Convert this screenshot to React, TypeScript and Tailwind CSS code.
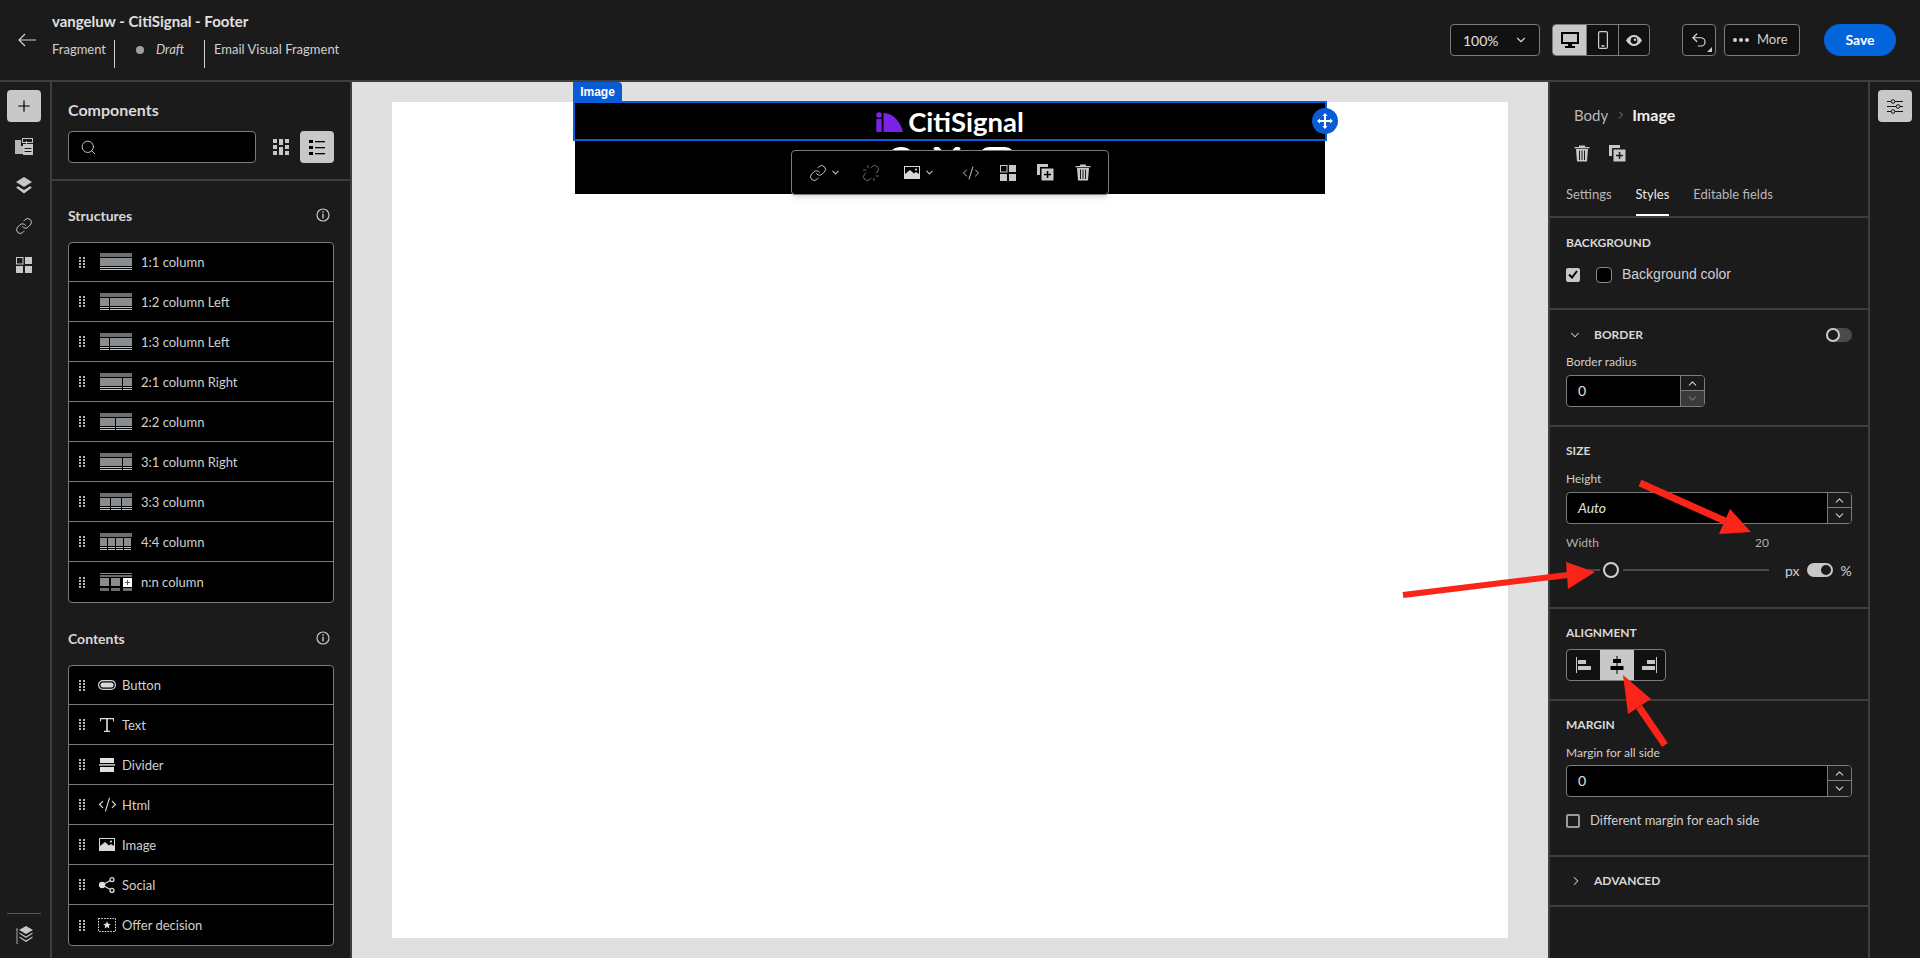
import { ChevronDown, ChevronRight, ChevronUp, CodeXml, Link, Plus, Search, Undo2, Unlink } from 'lucide-react'
import type { ReactNode } from 'react'

const font = { fontFamily: 'Lato, "Open Sans", sans-serif' }

function Handle() {
  return (
    <svg width="6" height="11" viewBox="0 0 6 11" fill="#b5b5b5" className="shrink-0">
      {[0, 3, 6, 9].map((y) => (
        <g key={y}>
          <rect x="0" y={y} width="2" height="2" />
          <rect x="4" y={y} width="2" height="2" />
        </g>
      ))}
    </svg>
  )
}

function Info() {
  return (
    <svg width="14" height="14" viewBox="0 0 14 14" fill="none" stroke="#c8c8c8" strokeWidth="1.2">
      <circle cx="7" cy="7" r="6" />
      <rect x="6.3" y="3.2" width="1.4" height="1.5" fill="#c8c8c8" stroke="none" />
      <rect x="6.3" y="5.8" width="1.4" height="4.6" fill="#c8c8c8" stroke="none" />
    </svg>
  )
}

function GridIcon({ size = 16 }: { size?: number }) {
  return (
    <svg width={size} height={size} viewBox="0 0 16 16" fill="#c8c8c8">
      <rect x="0.5" y="0.5" width="6.5" height="6.5" fill="none" stroke="#c8c8c8" />
      <rect x="9" y="0" width="7" height="7" />
      <rect x="0" y="9" width="7" height="7" />
      <rect x="9" y="9" width="7" height="7" />
    </svg>
  )
}

function TrashIcon({ color = '#c8c8c8' }: { color?: string }) {
  return (
    <svg width="16" height="17" viewBox="0 0 16 17" fill={color}>
      <rect x="0.5" y="2" width="15" height="1.3" />
      <rect x="5" y="0.5" width="6" height="1.5" />
      <path d="M2 4h12l-1 12.5H3z" />
      <g fill="#1b1b1b">
        <rect x="5" y="5.5" width="1" height="9.5" />
        <rect x="7.5" y="5.5" width="1" height="9.5" />
        <rect x="10" y="5.5" width="1" height="9.5" />
      </g>
    </svg>
  )
}

function CopyAddIcon({ plus = '#1b1b1b' }: { plus?: string }) {
  return (
    <svg width="17" height="17" viewBox="0 0 17 17" fill="#c8c8c8">
      <path d="M0 0h11v3H3v8H0z" />
      <rect x="4.5" y="4.5" width="12" height="12" />
      <rect x="7" y="9.8" width="7" height="1.5" fill={plus} />
      <rect x="9.8" y="7" width="1.5" height="7" fill={plus} />
    </svg>
  )
}

function ImageIcon() {
  return (
    <svg width="16" height="13" viewBox="0 0 16 13">
      <rect width="16" height="13" fill="#d8d8d8" />
      <path d="M1 1h14v7l-3-2-2 1.5L6 4 1 8z" fill="#000" />
      <circle cx="12" cy="3.5" r="1.1" fill="#d8d8d8" />
    </svg>
  )
}

function Thumb({ kind }: { kind: number[] }) {
  // each number is one column width of a 32px wide layout preview
  let x = 0
  return (
    <svg width="32" height="18" viewBox="0 0 32 18" className="shrink-0">
      <rect width="32" height="4" fill="#6e6e6e" />
      {kind.map((w, i) => {
        const cx = x
        x += w + 1
        return (
          <g key={i}>
            <rect x={cx} y="5" width={w} height="8" fill="#898d90" />
            <rect x={cx} y="14" width={w} height="1" fill="#c8c8c8" />
            <rect x={cx} y="16" width={w} height="1" fill="#c8c8c8" />
          </g>
        )
      })}
    </svg>
  )
}

function NnThumb() {
  return (
    <svg width="32" height="18" viewBox="0 0 32 18" className="shrink-0">
      <rect width="32" height="1" fill="#8a8a8a" />
      <rect y="2" width="32" height="2" fill="#6e6e6e" />
      <rect y="5" width="9" height="8" fill="#898d90" />
      <rect x="11" y="5" width="9" height="8" fill="#898d90" />
      <rect x="0" y="15" width="9" height="3" fill="#6e6e6e" />
      <rect x="11" y="15" width="9" height="3" fill="#6e6e6e" />
      <rect x="23" y="5" width="9" height="9" fill="#fff" />
      <rect x="25" y="9" width="5" height="1" fill="#555" />
      <rect x="27" y="7" width="1" height="5" fill="#555" />
      <rect x="23" y="15" width="9" height="3" fill="#6e6e6e" />
    </svg>
  )
}

const structures: { label: string; thumb: ReactNode }[] = [
  { label: '1:1 column', thumb: <Thumb kind={[32]} /> },
  { label: '1:2 column Left', thumb: <Thumb kind={[9, 22]} /> },
  { label: '1:3 column Left', thumb: <Thumb kind={[9, 22]} /> },
  { label: '2:1 column Right', thumb: <Thumb kind={[22, 9]} /> },
  { label: '2:2 column', thumb: <Thumb kind={[15, 16]} /> },
  { label: '3:1 column Right', thumb: <Thumb kind={[22, 9]} /> },
  { label: '3:3 column', thumb: <Thumb kind={[10, 10, 10]} /> },
  { label: '4:4 column', thumb: <Thumb kind={[7, 7, 7, 7]} /> },
  { label: 'n:n column', thumb: <NnThumb /> },
]

const contents: { label: string; icon: ReactNode }[] = [
  {
    label: 'Button',
    icon: (
      <svg width="18" height="10" viewBox="0 0 18 10">
        <rect x="0.6" y="0.6" width="16.8" height="8.8" rx="4.4" fill="none" stroke="#d8d8d8" strokeWidth="1.2" />
        <rect x="2.5" y="2.5" width="13" height="5" rx="2.5" fill="#d8d8d8" />
      </svg>
    ),
  },
  {
    label: 'Text',
    icon: (
      <svg width="14" height="14" viewBox="0 0 14 14" fill="#e0e0e0">
        <path d="M0 0h14v3.5h-1V1.3H7.8v11.4H10V14H4v-1.3h2.2V1.3H1v2.2H0z" />
      </svg>
    ),
  },
  {
    label: 'Divider',
    icon: (
      <svg width="16" height="14" viewBox="0 0 16 14" fill="#e0e0e0">
        <rect x="1" y="0" width="14" height="5" />
        <rect x="0" y="6.2" width="16" height="1.4" />
        <rect x="1" y="9" width="14" height="5" />
      </svg>
    ),
  },
  { label: 'Html', icon: <CodeXml size={19} strokeWidth={1.4} color="#e0e0e0" /> },
  { label: 'Image', icon: <ImageIcon /> },
  {
    label: 'Social',
    icon: (
      <svg width="16" height="16" viewBox="0 0 16 16" fill="none" stroke="#e0e0e0" strokeWidth="1.2">
        <circle cx="3" cy="8" r="2.6" fill="#e0e0e0" />
        <circle cx="13" cy="2.6" r="2" />
        <circle cx="13" cy="13.4" r="2" />
        <path d="M5 7l6.3-3.5M5 9l6.3 3.5" />
      </svg>
    ),
  },
  {
    label: 'Offer decision',
    icon: (
      <svg width="18" height="14" viewBox="0 0 18 14">
        <rect x="0.5" y="0.5" width="17" height="13" fill="none" stroke="#e0e0e0" strokeDasharray="1.6 1.2" />
        <path d="M9 3.2l1.1 2.5 2.7.2-2 1.8.6 2.7L9 9l-2.400 1.400.6-2.700-2-1.800 2.700-.2z" fill="#e0e0e0" />
      </svg>
    ),
  },
]

function ComponentList({ children }: { children: ReactNode }) {
  return <div className="flex flex-col divide-y divide-[#7c7c7c] rounded-[4px] border border-[#7c7c7c] bg-black">{children}</div>
}

function Stepper({ dimDown = false }: { dimDown?: boolean }) {
  return (
    <div className="flex w-[24px] shrink-0 flex-col divide-y divide-[#7c7c7c] border-l border-[#7c7c7c] bg-[#1b1b1b]">
      <div className="flex h-[15px] items-center justify-center">
        <ChevronUp size={13} strokeWidth={2} color="#d0d0d0" />
      </div>
      <div className={dimDown ? 'flex h-[15px] items-center justify-center bg-[#3a3a3a]' : 'flex h-[15px] items-center justify-center'}>
        <ChevronDown size={13} strokeWidth={2} color={dimDown ? '#777777' : '#d0d0d0'} />
      </div>
    </div>
  )
}

function NumberField({ value, italic = false, dimDown = false, className }: { value: string; italic?: boolean; dimDown?: boolean; className: string }) {
  return (
    <div className={`flex h-[32px] overflow-hidden rounded-[4px] border border-[#7c7c7c] bg-black ${className}`}>
      <div className={italic ? 'flex flex-1 items-center pb-[2px] pl-[11px] text-[14px] text-[#e0e0e0] italic' : 'flex flex-1 items-center pb-[2px] pl-[11px] text-[14px] text-[#e0e0e0]'}>{value}</div>
      <Stepper dimDown={dimDown} />
    </div>
  )
}

function SectionTitle({ children }: { children: ReactNode }) {
  return <div className="h-[16px] text-[12px] leading-[16px] font-bold text-[#d8d8d8]">{children}</div>
}

function App() {
  return (
    <div className="relative flex h-[958px] w-[1920px] flex-col overflow-hidden bg-[#1b1b1b] text-[#d0d0d0]" style={font}>
      {/* top bar */}
      <header className="flex h-[82px] shrink-0 items-center border-b-2 border-[#3e3e3e] pr-[24px]">
        <div className="flex w-[52px] shrink-0 justify-center pl-[1px]">
          <svg width="18" height="14" viewBox="0 0 18 14" fill="none" stroke="#d0d0d0" strokeWidth="1.2">
            <path d="M18 7H1M7 1L1 7l6 6" />
          </svg>
        </div>
        <div className="flex flex-col self-start pt-[11px]">
          <div className="text-[15px] leading-[20px] font-bold text-[#e0e0e0]">vangeluw - CitiSignal - Footer</div>
          <div className="mt-[9px] flex h-[28px] items-center text-[13px]">
            <span className="mb-[8px] w-[62px]">Fragment</span>
            <span className="h-[28px] w-px bg-[#d0d0d0]" />
            <span className="mb-[8px] ml-[21px] h-[8px] w-[8px] rounded-full bg-[#a0a0a0]" />
            <span className="mb-[8px] ml-[12px] w-[48px] italic">Draft</span>
            <span className="h-[28px] w-px bg-[#d0d0d0]" />
            <span className="mb-[8px] ml-[9px]">Email Visual Fragment</span>
          </div>
        </div>
        <div className="ml-auto flex items-center">
          <div className="flex h-[32px] w-[90px] items-center justify-between rounded-[4px] border border-[#7c7c7c] bg-[#111111] pr-[11px] pl-[12px] text-[14px] text-[#e0e0e0]">
            100%
            <ChevronDown size={14} strokeWidth={2} color="#d0d0d0" />
          </div>
          <div className="ml-[12px] flex h-[32px] w-[98px] divide-x divide-[#7c7c7c] overflow-hidden rounded-[4px] border border-[#7c7c7c] bg-[#111111]">
            <div className="flex w-[34px] items-center justify-center bg-[#c8c8c8]">
              <svg width="18" height="17" viewBox="0 0 18 17" fill="#000">
                <path d="M0 0h18v12H11v2h3v2H4v-2h3v-2H0zM2 2v8h14V2z" />
              </svg>
            </div>
            <div className="flex w-[32px] items-center justify-center">
              <svg width="10" height="18" viewBox="0 0 10 18" fill="none" stroke="#d0d0d0" strokeWidth="1.2">
                <rect x="0.6" y="0.6" width="8.800" height="16.800" rx="1.500" />
                <rect x="3.500" y="14.200" width="3" height="1.500" fill="#d0d0d0" stroke="none" />
              </svg>
            </div>
            <div className="flex flex-1 items-center justify-center">
              <svg width="16" height="11" viewBox="0 0 16 11">
                <path d="M0 5.500C2 2 5 0 8 0s6 2 8 5.500C14 9 11 11 8 11S2 9 0 5.500z" fill="#d0d0d0" />
                <circle cx="8" cy="5.500" r="3.400" fill="#111111" />
                <circle cx="9" cy="4.800" r="1.200" fill="#d0d0d0" />
              </svg>
            </div>
          </div>
          <div className="relative ml-[32px] flex h-[32px] w-[34px] items-center justify-center rounded-[4px] border border-[#7c7c7c] bg-[#111111]">
            <Undo2 size={18} strokeWidth={1.6} color="#d8d8d8" />
            <span className="absolute right-[3px] bottom-[3px] h-0 w-0 border-b-[5px] border-l-[5px] border-b-[#c8c8c8] border-l-transparent" />
          </div>
          <div className="ml-[8px] flex h-[32px] w-[76px] items-center rounded-[4px] border border-[#7c7c7c] bg-[#111111] pl-[8px] text-[13px]">
            <span className="flex w-[16px] justify-between">
              <span className="h-[4px] w-[4px] rounded-full bg-[#d0d0d0]" />
              <span className="h-[4px] w-[4px] rounded-full bg-[#d0d0d0]" />
              <span className="h-[4px] w-[4px] rounded-full bg-[#d0d0d0]" />
            </span>
            <span className="ml-[8px]">More</span>
          </div>
          <div className="ml-[24px] flex h-[32px] w-[72px] items-center justify-center rounded-full bg-[#0265dc] pb-[2px] text-[14px] font-bold text-white">Save</div>
        </div>
      </header>

      <div className="flex min-h-0 flex-1">
        {/* left rail */}
        <aside className="flex w-[52px] shrink-0 flex-col items-center border-r-2 border-[#3e3e3e] pr-[2px]">
          <div className="mt-[8px] flex h-[32px] w-[34px] items-center justify-center rounded-[4px] bg-[#c8c8c8]">
            <Plus size={18} strokeWidth={1.6} color="#000" />
          </div>
          <div className="mt-[16px]">
            <svg width="18" height="17" viewBox="0 0 18 17" fill="#c8c8c8">
              <path d="M0 2h6v6h5V3h1v13H0z" opacity="0.9" />
              <rect x="7.500" y="0.500" width="10" height="4" fill="none" stroke="#c8c8c8" />
              <rect x="8" y="6" width="10" height="11" />
              <rect x="9.500" y="10" width="7" height="1" fill="#1b1b1b" />
              <rect x="9.500" y="13" width="7" height="1" fill="#1b1b1b" />
            </svg>
          </div>
          <div className="mt-[22px]">
            <svg width="16" height="17" viewBox="0 0 16 17" fill="#c8c8c8">
              <path d="M8 0l8 5-8 5-8-5z" />
              <path d="M0 10.500l2-1.300 6 3.800 6-3.800 2 1.300-8 6z" />
            </svg>
          </div>
          <div className="mt-[23px]">
            <Link size={18} strokeWidth={1.3} color="#c8c8c8" />
          </div>
          <div className="mt-[22px]">
            <GridIcon />
          </div>
          <div className="mt-auto mb-[14px] flex w-[34px] flex-col items-center border-t border-[#555555] pt-[12px]">
            <svg width="17" height="18" viewBox="0 0 17 18" fill="#c8c8c8">
              <path d="M10 0l7 4-7 4-7-4z" />
              <path d="M3.500 6.500l6.500 4 6.500-4v1.200L10 12 3.500 7.700zM3.500 10.500l6.500 4 6.500-4v1.200L10 16l-6.500-4.300z" />
              <path d="M1 2L0 3.500h.6V18h.8V3.500H2z" />
            </svg>
          </div>
        </aside>

        {/* components panel */}
        <aside className="flex w-[300px] shrink-0 flex-col border-r-2 border-[#3e3e3e]">
          <div className="h-[99px] shrink-0 border-b-2 border-[#3e3e3e] px-[16px] pt-[17px]">
            <div className="h-[22px] text-[16px] leading-[22px] font-bold text-[#d8d8d8]">Components</div>
            <div className="mt-[10px] flex items-center">
              <div className="flex h-[32px] w-[188px] items-center rounded-[4px] border border-[#7c7c7c] bg-black pl-[11px]">
                <Search size={17} strokeWidth={1.3} color="#d0d0d0" />
              </div>
              <div className="ml-[17px]">
                <svg width="16" height="16" viewBox="0 0 16 16" fill="#c8c8c8">
                  <path d="M0 0h4v4H0zM0 6h4v4H0zM0 12h4v4H0zM6 0h4v6H6zM6 8h4v8H6zM12 0h4v4h-4zM12 6h4v4h-4zM12 12h4v4h-4z" />
                </svg>
              </div>
              <div className="ml-[11px] flex h-[32px] w-[34px] items-center justify-center rounded-[4px] bg-[#c8c8c8]">
                <svg width="16" height="15" viewBox="0 0 16 15" fill="#000">
                  <rect x="0" y="0" width="4" height="3" />
                  <rect x="0" y="6" width="4" height="3" />
                  <rect x="0" y="12" width="4" height="3" />
                  <rect x="6" y="1" width="10" height="1.300" />
                  <rect x="6" y="7" width="10" height="1.300" />
                  <rect x="6" y="13" width="10" height="1.300" />
                </svg>
              </div>
            </div>
          </div>
          <div className="min-h-0 flex-1 px-[16px] pt-[24px]">
            <div className="flex h-[20px] items-center justify-between pr-[4px] text-[14px] font-bold text-[#d8d8d8]">
              Structures
              <Info />
            </div>
            <div className="mt-[17px]">
              <ComponentList>
                {structures.map((s) => (
                  <div key={s.label} className="flex h-[40px] items-center pl-[10px] text-[13px] first:h-[39px]">
                    <Handle />
                    <div className="ml-[15px]">{s.thumb}</div>
                    <span className="ml-[9px] pt-[2px]">{s.label}</span>
                  </div>
                ))}
              </ComponentList>
            </div>
            <div className="mt-[25px] flex h-[20px] items-center justify-between pr-[4px] text-[14px] font-bold text-[#d8d8d8]">
              Contents
              <Info />
            </div>
            <div className="mt-[17px]">
              <ComponentList>
                {contents.map((c) => (
                  <div key={c.label} className="flex h-[40px] items-center pl-[10px] text-[13px] first:h-[39px]">
                    <Handle />
                    <div className="ml-[12px] flex w-[20px] justify-center">{c.icon}</div>
                    <span className="ml-[5px] pt-[2px]">{c.label}</span>
                  </div>
                ))}
              </ComponentList>
            </div>
          </div>
        </aside>

        {/* canvas */}
        <main className="flex w-[1196px] shrink-0 justify-center bg-[#e0e0e0] pt-[20px]">
          <div className="flex h-[836px] w-[1116px] justify-center bg-white">
            <div className="relative mt-px h-[91px] w-[750px] bg-black">
              <div className="flex h-[38px] items-center justify-center">
                <svg width="27" height="20" viewBox="0 0 27 20" fill="#7a22e6">
                  <circle cx="3" cy="3" r="2.800" />
                  <rect x="0.300" y="7" width="5.400" height="13" />
                  <path d="M7.500 1c9 0 17 8 19.500 19H7.500z" />
                </svg>
                <span className="ml-[5px] text-[27.5px] leading-[30px] font-bold text-white">CitiSignal</span>
              </div>
              {/* tops of the social icons, mostly covered by the toolbar */}
              <div className="flex h-[53px] items-start justify-center gap-[14px] overflow-hidden pt-[6px] pl-[1px]">
                <span className="h-[30px] w-[30px] rounded-full bg-white" />
                <svg width="30" height="24" viewBox="0 0 30 24" fill="none" stroke="#fff" strokeWidth="5" className="ml-[2px]">
                  <path d="M3 0l24 24M27 0L3 24" />
                </svg>
                <span className="ml-[3px] h-[24px] w-[36px] rounded-[10px] bg-white" />
              </div>

              {/* selection overlay */}
              <div className="absolute -top-[21px] -left-[2px] flex h-[20px] w-[49px] items-center justify-center rounded-tr-[4px] bg-[#0a5bd6] text-[12px] font-bold text-white" style={{ fontFamily: '"Liberation Sans", sans-serif' }}>
                Image
              </div>
              <div className="absolute -top-[2px] -left-[2px] h-[40px] w-[754px] border-2 border-[#0a5bd6]" />
              <div className="absolute top-[5px] -right-[13px] flex h-[26px] w-[26px] items-center justify-center rounded-full bg-[#0a5bd6]">
                <svg width="16" height="16" viewBox="0 0 16 16" fill="#fff">
                  <rect x="1" y="7" width="14" height="2" />
                  <rect x="7" y="1" width="2" height="14" />
                  <path d="M8 0l2.500 3h-5zM8 16l2.500-3h-5zM0 8l3-2.500v5zM16 8l-3-2.500v5z" />
                </svg>
              </div>
              <div className="absolute top-[47px] left-[216px] flex h-[45px] w-[318px] items-center rounded-[4px] border border-[#7c7c7c] bg-black pl-[17px] shadow-md">
                <Link size={18} strokeWidth={1.3} color="#c8c8c8" />
                <ChevronDown size={11} strokeWidth={2.2} color="#c8c8c8" className="ml-[3px]" />
                <Unlink size={18} strokeWidth={1.3} color="#6e6e6e" className="ml-[21px]" />
                <div className="ml-[24px]">
                  <ImageIcon />
                </div>
                <ChevronDown size={11} strokeWidth={2.2} color="#c8c8c8" className="ml-[4px]" />
                <CodeXml size={18} strokeWidth={1.3} color="#c8c8c8" className="ml-[27px]" />
                <div className="ml-[20px]">
                  <GridIcon />
                </div>
                <div className="ml-[21px]">
                  <CopyAddIcon plus="#000" />
                </div>
                <div className="ml-[21px]">
                  <TrashIcon />
                </div>
              </div>
            </div>
          </div>
        </main>

        {/* properties panel */}
        <aside className="flex w-[322px] shrink-0 flex-col border-x-2 border-[#3e3e3e]">
          <div className="h-[136px] shrink-0 border-b-2 border-[#3e3e3e]">
            <div className="mt-[22px] flex h-[22px] items-center pl-[24px]">
              <span className="text-[15px] text-[#b8b8b8]">Body</span>
              <ChevronRight size={12} strokeWidth={1.6} color="#a0a0a0" className="ml-[7px]" />
              <span className="ml-[5px] text-[16px] font-bold text-[#f0f0f0]">Image</span>
            </div>
            <div className="mt-[19px] flex items-center pl-[24px]">
              <TrashIcon />
              <div className="ml-[19px]">
                <CopyAddIcon />
              </div>
            </div>
            <div className="mt-[18px] flex h-[36px] gap-[24px] pt-[5px] pl-[16px] text-[13px] text-[#b8b8b8]">
              <span>Settings</span>
              <span className="-mt-[5px] h-[36px] border-b-2 border-white pt-[5px] text-[#e8e8e8]">Styles</span>
              <span>Editable fields</span>
            </div>
          </div>

          <div className="h-[92px] shrink-0 border-b-2 border-[#3e3e3e] px-[16px] pt-[17px]">
            <SectionTitle>BACKGROUND</SectionTitle>
            <div className="mt-[13px] flex items-center">
              <div className="flex h-[14px] w-[14px] items-center justify-center rounded-[2px] bg-[#c8c8c8]">
                <svg width="10" height="9" viewBox="0 0 10 9" fill="none" stroke="#000" strokeWidth="2">
                  <path d="M1 4.500l3 3L9 1" />
                </svg>
              </div>
              <div className="ml-[16px] h-[16px] w-[16px] rounded-[4px] border border-[#8a8a8a] bg-black" />
              <span className="ml-[10px] text-[14px]" style={{ fontFamily: '"Liberation Sans", sans-serif' }}>
                Background color
              </span>
            </div>
          </div>

          <div className="h-[117px] shrink-0 border-b-2 border-[#3e3e3e] px-[16px] pt-[16px]">
            <div className="flex h-[18px] items-center">
              <ChevronDown size={14} strokeWidth={1.8} color="#d0d0d0" className="ml-[2px]" />
              <span className="ml-[12px] text-[12px] font-bold text-[#d8d8d8]">BORDER</span>
              <span className="relative ml-auto h-[14px] w-[26px] rounded-full bg-[#4a4a4a]">
                <span className="absolute top-0 left-0 h-[14px] w-[14px] rounded-full border-2 border-[#c8c8c8] bg-[#1b1b1b]" />
              </span>
            </div>
            <div className="mt-[9px] h-[18px] text-[12px] leading-[18px]">Border radius</div>
            <NumberField value="0" dimDown className="mt-[4px] w-[139px]" />
          </div>

          <div className="h-[182px] shrink-0 border-b-2 border-[#3e3e3e] px-[16px] pt-[16px]">
            <SectionTitle>SIZE</SectionTitle>
            <div className="mt-[11px] h-[18px] text-[12px] leading-[18px]">Height</div>
            <NumberField value="Auto" italic className="mt-[4px] w-full" />
            <div className="mt-[10px] flex h-[18px] items-center justify-between pr-[83px] text-[12px] text-[#b0b0b0]">
              <span>Width</span>
              <span>20</span>
            </div>
            <div className="mt-[8px] flex h-[20px] items-center">
              <span className="ml-[22px] h-[2px] w-[12px] bg-[#4a4a4a]" />
              <span className="ml-[3px] h-[16px] w-[16px] shrink-0 rounded-full border-2 border-[#d0d0d0] bg-[#1b1b1b]" />
              <span className="ml-[4px] h-[2px] w-[146px] bg-[#4a4a4a]" />
              <span className="ml-[16px] text-[14px]">px</span>
              <span className="relative ml-[7px] h-[14px] w-[26px] rounded-full bg-[#c8c8c8]">
                <span className="absolute top-[2px] right-[2px] h-[10px] w-[10px] rounded-full bg-[#1b1b1b]" />
              </span>
              <span className="ml-[8px] text-[14px]">%</span>
            </div>
          </div>

          <div className="h-[92px] shrink-0 border-b-2 border-[#3e3e3e] px-[16px] pt-[16px]">
            <SectionTitle>ALIGNMENT</SectionTitle>
            <div className="mt-[8px] flex h-[32px] w-[100px] overflow-hidden rounded-[4px] border border-[#7c7c7c] bg-[#111111]">
              <div className="flex w-[33px] items-center justify-center">
                <svg width="15" height="16" viewBox="0 0 15 16" fill="#c8c8c8">
                  <rect x="0" y="0" width="1" height="16" />
                  <rect x="2" y="3" width="8" height="4" />
                  <rect x="2" y="9" width="13" height="4" />
                </svg>
              </div>
              <div className="flex w-[34px] items-center justify-center bg-[#c8c8c8]">
                <svg width="14" height="18" viewBox="0 0 14 18" fill="#000">
                  <rect x="6.500" y="0" width="1" height="18" />
                  <rect x="3" y="3" width="8" height="4" />
                  <rect x="0.500" y="10" width="13" height="4" />
                </svg>
              </div>
              <div className="flex flex-1 items-center justify-center">
                <svg width="15" height="16" viewBox="0 0 15 16" fill="#c8c8c8">
                  <rect x="14" y="0" width="1" height="16" />
                  <rect x="5" y="3" width="8" height="4" />
                  <rect x="0" y="9" width="13" height="4" />
                </svg>
              </div>
            </div>
          </div>

          <div className="h-[156px] shrink-0 border-b-2 border-[#3e3e3e] px-[16px] pt-[16px]">
            <SectionTitle>MARGIN</SectionTitle>
            <div className="mt-[11px] h-[18px] text-[12px] leading-[18px]">Margin for all side</div>
            <NumberField value="0" className="mt-[3px] w-full" />
            <div className="mt-[14px] flex items-center">
              <span className="h-[14px] w-[14px] rounded-[2px] border-2 border-[#9a9a9a]" />
              <span className="ml-[10px] text-[13px]">Different margin for each side</span>
            </div>
          </div>

          <div className="flex h-[50px] shrink-0 items-center border-b-2 border-[#3e3e3e] pl-[16px]">
            <ChevronRight size={14} strokeWidth={1.8} color="#d0d0d0" className="ml-[3px]" />
            <span className="ml-[11px] text-[12px] font-bold text-[#d8d8d8]">ADVANCED</span>
          </div>
        </aside>

        {/* right rail */}
        <aside className="flex w-[50px] shrink-0 flex-col items-center pt-[8px]">
          <div className="flex h-[32px] w-[34px] items-center justify-center rounded-[4px] bg-[#c8c8c8]">
            <svg width="16" height="15" viewBox="0 0 16 15" fill="none" stroke="#111111">
              <path d="M0 2.500h4M8 2.500h8M0 7.500h9M13 7.500h3M0 12.500h4M8 12.500h8" />
              <circle cx="6" cy="2.500" r="1.800" />
              <circle cx="11" cy="7.500" r="1.800" />
              <circle cx="6" cy="12.500" r="1.800" />
            </svg>
          </div>
        </aside>
      </div>

      {/* red annotation arrows drawn on top of the screenshot */}
      <svg className="pointer-events-none absolute top-0 left-0" width="1920" height="958" viewBox="0 0 1920 958" fill="#fb2419" stroke="none">
        <path d="M1640 483l85 38" stroke="#fb2419" strokeWidth="7" />
        <path d="M1751 532l-21-23-11 25z" />
        <path d="M1403 595l165-20" stroke="#fb2419" strokeWidth="6" />
        <path d="M1595 572l-29-10 2 27z" />
        <path d="M1665 745l-26-38" stroke="#fb2419" strokeWidth="7" />
        <path d="M1623 675l28 24-23 15z" />
      </svg>
    </div>
  )
}

export default App
